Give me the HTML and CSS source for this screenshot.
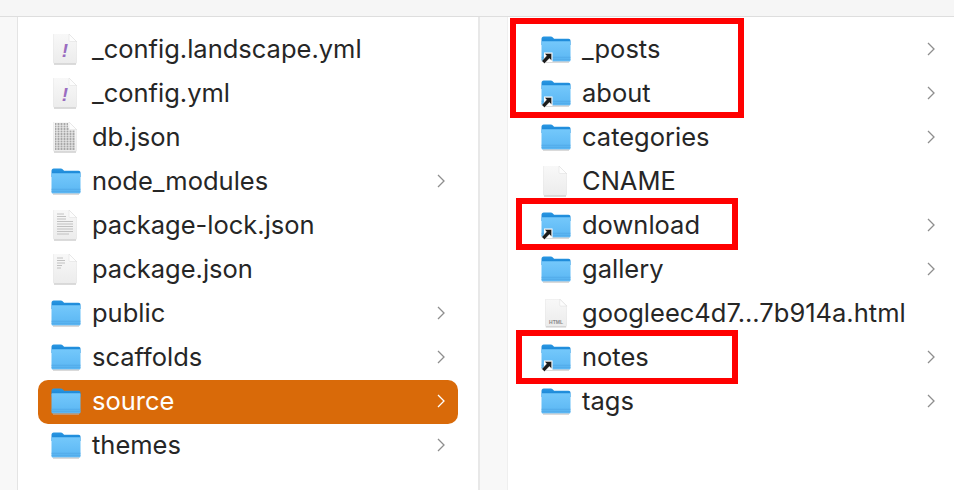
FILE: index.html
```html
<!DOCTYPE html>
<html lang="en">
<head>
<meta charset="utf-8">
<title>Finder</title>
<link rel="stylesheet" href="styles.css">
</head>
<body>
<svg class="defs" width="0" height="0" aria-hidden="true">
  <defs>
    <linearGradient id="fb" x1="0" y1="0" x2="0" y2="1"><stop offset="0" stop-color="#74c8fb"/><stop offset="1" stop-color="#5ab6f3"/></linearGradient>
    <linearGradient id="ft" x1="0" y1="0" x2="0" y2="1"><stop offset="0" stop-color="#2a97e2"/><stop offset="1" stop-color="#1480d2"/></linearGradient>
    <linearGradient id="pg" x1="0" y1="0" x2="0" y2="1"><stop offset="0" stop-color="#f8f8f8"/><stop offset="1" stop-color="#ececec"/></linearGradient>
    <symbol id="folder" viewBox="0 0 30 27">
      <path d="M.5 3C.5 1.500 1.300.5 2.700.5h7c1 0 1.600.4 2.200 1l1.200 1.300H27.500c1.300 0 2 .7 2 2V9H.5z" fill="url(#ft)"/>
      <path d="M.5 6.300c0-.7.5-1 1-1h27c.6 0 1 .3 1 1V24c0 1-.6 1.500-1.600 1.500H2.100C1.100 25.500.5 25 .5 24z" fill="url(#fb)"/>
      <path d="M.5 21.300h29M.5 23.300h29" stroke="#4ea6e4" stroke-width=".7" fill="none"/>
      <path d="M2 26.100h26" stroke="#b9b9b9" stroke-width=".9"/>
    </symbol>
    <symbol id="alias" viewBox="0 0 12 12">
      <rect x="3" y=".5" width="8.500" height="9.500" fill="#fff"/>
      <path d="M3.600 1.500h7v7l-2.300-2.100-4.800 5.100-2.700-2.500 4.800-5.200z" fill="#1b1b1b" stroke="#fff" stroke-width=".4"/>
    </symbol>
    <symbol id="page" viewBox="0 0 26 32">
      <path d="M1.500 1H17l7.500 7.500V29.500c0 .6-.4 1-1 1h-21c-.6 0-1-.4-1-1z" fill="url(#pg)"/>
      <path d="M17 1v6.500c0 .6.400 1 1 1h6.500z" fill="#fdfdfd" stroke="#dcdcdc" stroke-width=".5"/>
      <path d="M2 31h22" stroke="#c4c4c4" stroke-width=".8"/>
    </symbol>
    <symbol id="chev" viewBox="0 0 8 14">
      <path d="M1 1l6 6-6 6" fill="none" stroke="currentColor" stroke-width="1.300"/>
    </symbol>
  </defs>
</svg>
<div class="toolbar"></div>
<main class="browser">
  <div class="strip strip-first"></div>
  <section class="column column-left">
    <ul class="list">
      <li class="row"><span class="ico"><svg class="page"><use href="#page"/></svg><span class="bang">!</span></span><span class="name">_config.landscape.yml</span></li>
      <li class="row"><span class="ico"><svg class="page"><use href="#page"/></svg><span class="bang">!</span></span><span class="name">_config.yml</span></li>
      <li class="row"><span class="ico"><svg class="page" viewBox="0 0 26 32"><use href="#page" width="26" height="32"/><path class="noise" d="M3 3h13M3 5.500h13M3 8h14M3 10.500h20M3 13h20M3 15.500h20M3 18h20M3 20.500h20M3 23h20M3 25.500h20M3 28h20"/></svg></span><span class="name">db.json</span></li>
      <li class="row"><span class="ico"><svg class="folder"><use href="#folder"/></svg></span><span class="name">node_modules</span><svg class="chev"><use href="#chev"/></svg></li>
      <li class="row"><span class="ico"><svg class="page" viewBox="0 0 26 32"><use href="#page" width="26" height="32"/><path class="lines" d="M5 5h7M5 7.500h9M5 10h9M5 12.500h16M5 15h16M5 17.500h16M5 20h16M5 22.500h16M5 25h12"/></svg></span><span class="name">package-lock.json</span></li>
      <li class="row"><span class="ico"><svg class="page" viewBox="0 0 26 32"><use href="#page" width="26" height="32"/><path class="lines" d="M5 5h6M5 7.500h8M5 10h8M5 12.500h5M5 15h4"/></svg></span><span class="name">package.json</span></li>
      <li class="row"><span class="ico"><svg class="folder"><use href="#folder"/></svg></span><span class="name">public</span><svg class="chev"><use href="#chev"/></svg></li>
      <li class="row"><span class="ico"><svg class="folder"><use href="#folder"/></svg></span><span class="name">scaffolds</span><svg class="chev"><use href="#chev"/></svg></li>
      <li class="row selected"><span class="ico"><svg class="folder"><use href="#folder"/></svg></span><span class="name">source</span><svg class="chev"><use href="#chev"/></svg></li>
      <li class="row"><span class="ico"><svg class="folder"><use href="#folder"/></svg></span><span class="name">themes</span><svg class="chev"><use href="#chev"/></svg></li>
    </ul>
  </section>
  <div class="strip strip-mid"></div>
  <section class="column column-right">
    <ul class="list">
      <li class="row"><span class="ico"><svg class="folder"><use href="#folder"/></svg><svg class="alias"><use href="#alias"/></svg></span><span class="name">_posts</span><svg class="chev"><use href="#chev"/></svg></li>
      <li class="row"><span class="ico"><svg class="folder"><use href="#folder"/></svg><svg class="alias"><use href="#alias"/></svg></span><span class="name">about</span><svg class="chev"><use href="#chev"/></svg></li>
      <li class="row"><span class="ico"><svg class="folder"><use href="#folder"/></svg></span><span class="name">categories</span><svg class="chev"><use href="#chev"/></svg></li>
      <li class="row"><span class="ico"><svg class="page"><use href="#page"/></svg></span><span class="name">CNAME</span></li>
      <li class="row"><span class="ico"><svg class="folder"><use href="#folder"/></svg><svg class="alias"><use href="#alias"/></svg></span><span class="name">download</span><svg class="chev"><use href="#chev"/></svg></li>
      <li class="row"><span class="ico"><svg class="folder"><use href="#folder"/></svg></span><span class="name">gallery</span><svg class="chev"><use href="#chev"/></svg></li>
      <li class="row"><span class="ico"><svg class="page page-small"><use href="#page"/></svg><span class="tag">HTML</span></span><span class="name">googleec4d7...7b914a.html</span></li>
      <li class="row"><span class="ico"><svg class="folder"><use href="#folder"/></svg><svg class="alias"><use href="#alias"/></svg></span><span class="name">notes</span><svg class="chev"><use href="#chev"/></svg></li>
      <li class="row"><span class="ico"><svg class="folder"><use href="#folder"/></svg></span><span class="name">tags</span><svg class="chev"><use href="#chev"/></svg></li>
    </ul>
    <div class="mark mark-a"></div>
    <div class="mark mark-b"></div>
    <div class="mark mark-c"></div>
  </section>
</main>
</body>
</html>
```
FILE: styles.css
```css
* { box-sizing: border-box; }
html, body { margin: 0; height: 100%; overflow: hidden; background: #fff; }
body {
  display: flex;
  flex-direction: column;
  font-family: Inter, "Liberation Sans", sans-serif;
  color: #262626;
}
.defs { position: absolute; }
.toolbar { height: 17px; flex: none; background: #f6f6f6; border-bottom: 1px solid #dedede; }
.browser { flex: 1; display: flex; min-height: 0; }
.strip { flex: none; background: #f8f8f8; border-right: 1px solid #e4e4e4; }
.strip-first { width: 18px; }
.strip-mid { width: 30px; border-left: 2px solid #e8e8e8; border-right-color: #efefef; }
.column { position: relative; background: #fff; }
.column-left { width: 460px; flex: none; padding: 11px 20px 0; }
.column-right { flex: 1; padding: 11px 16px 0 0; }
.list { list-style: none; margin: 0; padding: 0; }
.row { display: flex; align-items: center; height: 44px; border-radius: 10px; }
.ico { position: relative; flex: none; width: 54px; height: 44px; display: block; }
.column-right .ico { width: 74px; }
.folder { position: absolute; left: 13px; top: 8px; width: 30px; height: 27px; }
.column-right .folder { left: 33px; }
.alias { position: absolute; left: 33px; top: 24px; width: 12px; height: 12px; }
.page { position: absolute; left: 14px; top: 5px; width: 26px; height: 32px; filter: drop-shadow(0 0 .5px #d0d0d0); }
.column-right .page { left: 34px; }
.column-right .page-small { left: 36px; top: 6px; width: 24px; height: 30px; }
.bang {
  position: absolute; left: 14px; top: 5px; width: 26px; height: 32px;
  text-align: center; font: italic 700 19px/35px "Liberation Sans", sans-serif; color: #9a6cc0;
}
.tag {
  position: absolute; left: 36px; top: 27px; width: 24px; text-align: center;
  font: 700 5px/6px "Liberation Sans", sans-serif; color: #8a8a8a;
}
.noise { stroke: #a8a8a8; stroke-width: 2; stroke-dasharray: 1 .5; fill: none; }
.lines { stroke: #bbb; stroke-width: .9; fill: none; }
.name {
  flex: 1; min-width: 0; margin-top: -2px; font-size: 25.500px; line-height: 44px; white-space: nowrap;
}
.chev { flex: none; width: 8px; height: 14px; margin: -2px 13px 0 0; color: #8e8e8e; }
.column-right .chev { margin-right: 3px; }
.selected { background: #d96a09; color: #fff; }
.selected .chev { color: #fff; }
.mark { position: absolute; border: 6px solid #ff0000; pointer-events: none; }
.mark-a { left: 2px; top: 1px; width: 234px; height: 100px; }
.mark-b { left: 8px; top: 181px; width: 222px; height: 52px; }
.mark-c { left: 8px; top: 313px; width: 222px; height: 54px; }
```
